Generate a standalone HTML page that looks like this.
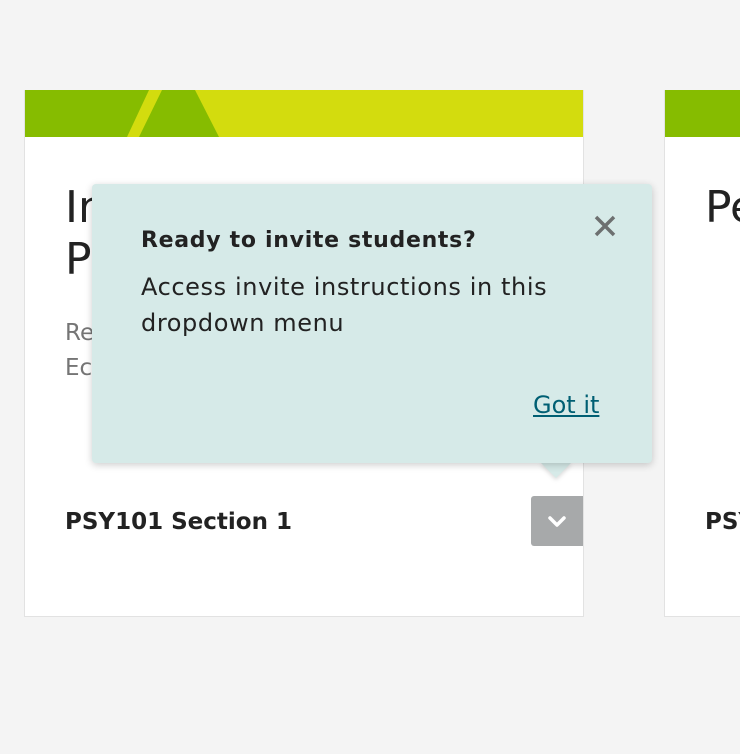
<!DOCTYPE html>
<html><head><style>
html,body{margin:0;overflow:hidden}
body{width:740px;height:754px;background:#f4f4f4;font-family:"DejaVu Sans","Liberation Sans",sans-serif;position:relative}
.wrap{position:absolute;left:0;top:0;width:740px;height:754px;overflow:hidden}
.card{position:absolute;top:90px;width:558px;height:526px;background:#fff;border:1px solid #e2e2e2;border-top:none;overflow:hidden}
.t{position:absolute;left:40px;top:92px;font-size:44px;line-height:52px;color:#222}
.s{position:absolute;left:40px;top:226px;font-size:23px;line-height:35px;color:#757575}
.f{position:absolute;left:40px;top:419px;font-size:23px;font-weight:bold;color:#222}
.pop{position:absolute;left:92px;top:184px;width:560px;height:279px;background:#d6eae8;border-radius:4px;box-shadow:0 2px 8px rgba(0,0,0,.2)}
</style></head><body><div class="wrap">
<div class="card" style="left:24px">
<svg width="560" height="47" style="position:absolute;left:0;top:0"><rect width="560" height="47" fill="#d3dc0e"/><polygon points="0,0 124,0 102,47 0,47" fill="#86bc00"/><polygon points="137,0 170,0 194,47 114,47" fill="#86bc00"/></svg>
<div class="t">In<br>Ps</div>
<div class="s">Re<br>Ec</div>
<div class="f">PSY101 Section 1</div>
<div style="position:absolute;left:506px;top:406px;width:52px;height:50px;background:#a7a9aa;border-radius:3px 0 0 3px"><svg width="52" height="50"><path d="M19 22 L26 29 L33 22" stroke="#fff" stroke-width="3.5" fill="none" stroke-linecap="round" stroke-linejoin="round"/></svg></div>
</div>
<div class="card" style="left:664px">
<svg width="560" height="47" style="position:absolute;left:0;top:0"><rect width="560" height="47" fill="#86bc00"/></svg>
<div class="t">Pe</div>
<div class="f">PSY</div>
</div>
<div style="position:absolute;left:540px;top:462px;width:0;height:0;border-left:16px solid transparent;border-right:16px solid transparent;border-top:16px solid #d6eae8;filter:drop-shadow(0 2px 2px rgba(0,0,0,.15))"></div>
<div class="pop">
<div style="position:absolute;left:49px;top:44px;font-size:22px;letter-spacing:0.7px;font-weight:bold;color:#222;white-space:nowrap">Ready to invite students?</div>
<div style="position:absolute;left:49px;top:85px;font-size:24px;letter-spacing:0.6px;line-height:36px;color:#222;white-space:nowrap">Access invite instructions in this<br>dropdown menu</div>
<svg width="24" height="24" style="position:absolute;left:501px;top:30px"><path d="M3 3 L21 21 M21 3 L3 21" stroke="#6d7070" stroke-width="3.5"/></svg>
<div style="position:absolute;left:441px;top:207px;font-size:24px;color:#005f73;text-decoration:underline">Got it</div>
</div>
</div></body></html>
